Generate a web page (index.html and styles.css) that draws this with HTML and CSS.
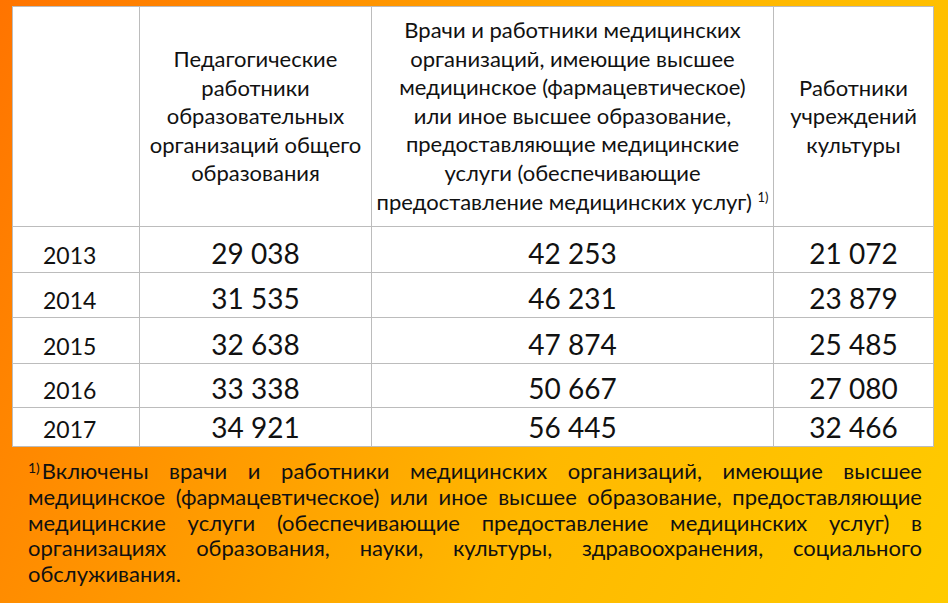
FILE: index.html
```html
<!DOCTYPE html>
<html lang="ru">
<head>
<meta charset="utf-8">
<title>Таблица</title>
<link rel="stylesheet" href="styles.css">
</head>
<body>
<div class="slide">
  <table class="data">
    <colgroup>
      <col class="c-year">
      <col class="c-ped">
      <col class="c-med">
      <col class="c-cult">
    </colgroup>
    <thead>
      <tr class="head-row">
        <th></th>
        <th class="mid">Педагогические<br>работники<br>образовательных<br>организаций общего<br>образования</th>
        <th class="top">Врачи и работники медицинских<br>организаций, имеющие высшее<br>медицинское (фармацевтическое)<br>или иное высшее образование,<br>предоставляющие медицинские<br>услуги (обеспечивающие<br>предоставление медицинских услуг) <sup>1)</sup></th>
        <th class="mid">Работники<br>учреждений<br>культуры</th>
      </tr>
    </thead>
    <tbody>
      <tr class="r1"><td class="year">2013</td><td class="num">29 038</td><td class="num">42 253</td><td class="num">21 072</td></tr>
      <tr class="r2"><td class="year">2014</td><td class="num">31 535</td><td class="num">46 231</td><td class="num">23 879</td></tr>
      <tr class="r3"><td class="year">2015</td><td class="num">32 638</td><td class="num">47 874</td><td class="num">25 485</td></tr>
      <tr class="r4"><td class="year">2016</td><td class="num">33 338</td><td class="num">50 667</td><td class="num">27 080</td></tr>
      <tr class="r5"><td class="year">2017</td><td class="num">34 921</td><td class="num">56 445</td><td class="num">32 466</td></tr>
    </tbody>
  </table>
  <p class="note"><sup>1)</sup>Включены врачи и работники медицинских организаций, имеющие высшее медицинское (фармацевтическое) или иное высшее образование, предоставляющие медицинские услуги (обеспечивающие предоставление медицинских услуг) в организациях образования, науки, культуры, здравоохранения, социального обслуживания.</p>
</div>
</body>
</html>
```
FILE: styles.css
```css
html, body {
  margin: 0;
  padding: 0;
}
body {
  width: 948px;
  height: 603px;
  overflow: hidden;
  font-family: Lato, "Open Sans", "DejaVu Sans", sans-serif;
  color: #111;
}
.slide {
  width: 948px;
  height: 603px;
  box-sizing: border-box;
  padding: 6px 15px 0 12px;
  background: linear-gradient(115deg, #ff7400 0%, #ff9400 30%, #ffb800 62%, #ffcb00 100%);
}
.data {
  width: 921px;
  border-collapse: collapse;
  background: #fff;
  table-layout: fixed;
}
.c-year { width: 127px; }
.c-ped { width: 232px; }
.c-med { width: 402px; }
.c-cult { width: 160px; }
.data th, .data td {
  border: 1px solid #bcbcbc;
  padding: 0;
}
.data th {
  font-weight: normal;
  font-size: 22px;
  line-height: 28.6px;
  text-align: center;
}
.head-row { height: 220px; }
.data th.mid { vertical-align: middle; }
.data th.top { vertical-align: top; padding-top: 9px; }
.data th sup {
  font-size: 13px;
  line-height: 0;
  vertical-align: 8px;
}
.r1 { height: 46px; }
.r2 { height: 45px; }
.r3 { height: 46px; }
.r4 { height: 44px; }
.r5 { height: 39px; }
.data td.year {
  font-size: 23px;
  padding-left: 30px;
  vertical-align: bottom;
  padding-bottom: 3px;
}
.data td.num {
  font-size: 28px;
  line-height: 30px;
  text-align: center;
  vertical-align: bottom;
  padding-bottom: 4px;
}
.note {
  margin: 11px 11px 0 16px;
  font-size: 22px;
  line-height: 25.8px;
  text-align: justify;
}
.note sup {
  font-size: 14px;
  line-height: 0;
  vertical-align: 6px;
  margin-right: 2px;
}
```
